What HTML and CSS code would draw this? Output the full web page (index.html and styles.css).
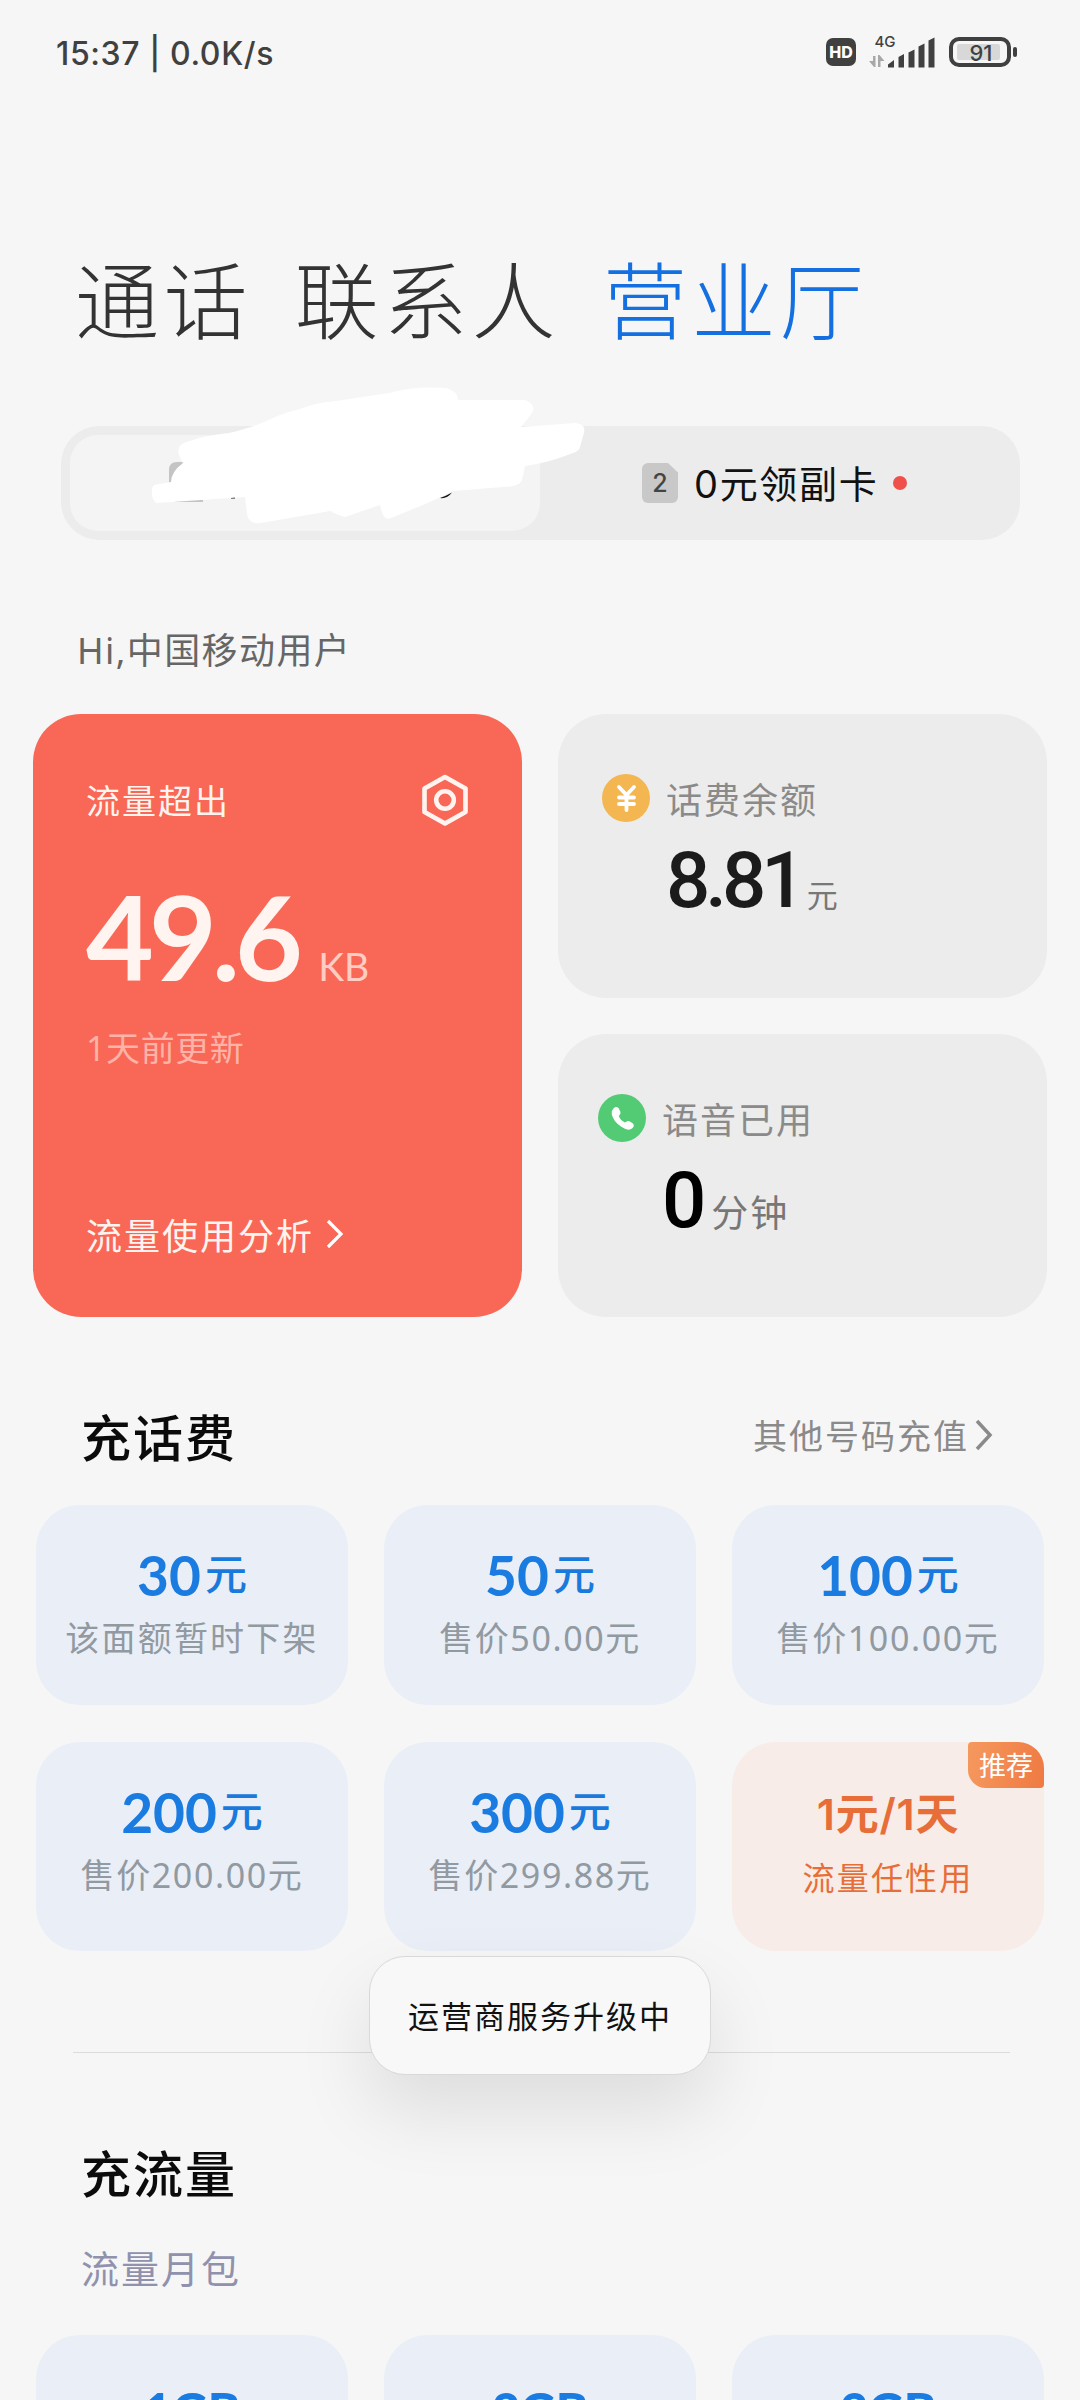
FILE: index.html
```html
<!DOCTYPE html>
<html lang="zh-CN">
<head>
<meta charset="utf-8">
<title>营业厅</title>
<link rel="stylesheet" href="styles.css">
</head>
<body>
<div class="screen">
  <header class="status">
    <span class="status-time">15:37 | 0.0K/s</span>
    <svg class="status-icons" viewBox="820 28 200 48" width="200" height="48">
      <rect x="826" y="38" width="30" height="28" rx="7" fill="#404040"/>
      <text x="841" y="57.5" text-anchor="middle" class="hd">HD</text>
      <text x="874.5" y="46.500" class="g4">4G</text>
      <g fill="#a8a8a8"><path d="M873 56h2.500v11h-1.500l-5-6h4z"/><path d="M878 67h2.500v-6h4l-5-6h-1.500z"/></g>
      <g fill="#404040">
        <path d="M888 67.500v-3l6-4.500v7.500z"/><path d="M898.500 67.500v-10.500l5.500-3v13.500z"/><path d="M908.500 67.500v-15l6-3v18z"/><path d="M918.500 67.500v-21l6-3v24z"/><path d="M928.500 67.500v-27l6-3v30z"/>
        <rect x="1013" y="47" width="4" height="10" rx="2"/>
      </g>
      <rect x="951" y="39" width="58" height="26" rx="8" fill="none" stroke="#404040" stroke-width="4"/>
      <rect x="957" y="44" width="43" height="16" rx="2" fill="#d8d8d8"/>
      <text x="981" y="60.500" text-anchor="middle" class="batt">91</text>
    </svg>
  </header>

  <nav class="tabs">
    <span>通话</span><span>联系人</span><span class="active">营业厅</span>
  </nav>

  <div class="sim">
    <div class="sim-item selected"></div>
    <div class="sim-item">
      <span class="sim-icon">2</span>
      <span class="sim-label">0元领副卡</span>
      <i class="dot"></i>
    </div>
    <svg class="scribble" viewBox="150 385 440 142" width="440" height="142">
      <path d="M169 484v-14q0-8 8-8h10l-4 22h-10z" fill="#c4c4c4"/>
      <rect x="175" y="500" width="28" height="2" fill="#c4c4c4"/>
      <rect x="231" y="495.500" width="4" height="3" fill="#111"/>
      <path fill="#fff" d="M154 485L171 482Q171 472 183 463Q173 448 184 443Q205 435 229 433Q250 428 264 422Q285 412 300 409Q318 402 336 401L389 393Q415 386 446 388Q458 391 458 400L525 400Q537 405 532 413L521 427L575 423Q588 424 583 436L580 447Q579 451 573 453Q548 463 525 466L522 480Q519 487 503 487L453 491Q425 505 388 519Q383 519 380 505L345 517Q340 516 330 511L261 523Q249 525 247 514L245 497L157 503Q151 501 152 488Z"/>
      <path d="M440 498Q446 496 452 492.500Q447 499 440 498Z" fill="#111"/>
    </svg>
  </div>

  <p class="hello">Hi,中国移动用户</p>

  <section class="usage">
    <article class="data-card">
      <div class="data-head">
        <span>流量超出</span>
        <svg viewBox="0 0 48 52" width="48" height="52" fill="none" stroke="#fff4f0" stroke-width="4.600" stroke-linejoin="round"><path d="M24 3L44.500 14.500V38L24 49.500L3.500 38V14.500Z"/><circle cx="24" cy="26" r="8.800"/></svg>
      </div>
      <div class="data-value"><b>49.6</b><span>KB</span></div>
      <div class="data-time">1天前更新</div>
      <div class="data-link">流量使用分析<svg viewBox="0 0 18 30" width="18" height="30" fill="none" stroke="#fff" stroke-width="3.200"><path d="M2 2L15 15L2 28"/></svg></div>
    </article>
    <article class="mini fee">
      <svg viewBox="0 0 48 48" width="48" height="48"><circle cx="24" cy="24" r="24" fill="#f3b651"/><g stroke="#fff" stroke-width="3.800" fill="none" stroke-linecap="round"><path d="M17 13L24.500 21L32 13M24.500 21V36M17 23.500H32M17 30H32"/></g></svg>
      <div class="mini-body">
        <div class="mini-title">话费余额</div>
        <div class="mini-value"><b>8.81</b><span>元</span></div>
      </div>
    </article>
    <article class="mini voice">
      <svg viewBox="0 0 48 48" width="48" height="48"><circle cx="24" cy="24" r="24" fill="#52cb74"/><path fill="#fff" d="M15.500 14.500Q18 12 20.500 14L22.500 18Q23 20 20.800 22Q22.500 26.500 27 28.500Q29 26.500 31 27L35 29.500Q37 32 34 34.500Q30 37.500 23 32.500Q15 27 13.700 20Q13.300 16.500 15.500 14.500Z"/></svg>
      <div class="mini-body">
        <div class="mini-title">语音已用</div>
        <div class="mini-value"><b>0</b><span>分钟</span></div>
      </div>
    </article>
  </section>

  <div class="section-head">
    <h2>充话费</h2>
    <a>其他号码充值<svg viewBox="0 0 18 32" width="18" height="32" fill="none" stroke="#8a8a8a" stroke-width="3.500"><path d="M2 2L15 16L2 30"/></svg></a>
  </div>
  <section class="grid recharge">
    <div class="plan"><div class="amount"><b>30</b><span>元</span></div><div class="price cjk">该面额暂时下架</div></div>
    <div class="plan"><div class="amount"><b>50</b><span>元</span></div><div class="price">售价50.00元</div></div>
    <div class="plan"><div class="amount"><b>100</b><span>元</span></div><div class="price">售价100.00元</div></div>
    <div class="plan"><div class="amount"><b>200</b><span>元</span></div><div class="price">售价200.00元</div></div>
    <div class="plan"><div class="amount"><b>300</b><span>元</span></div><div class="price">售价299.88元</div></div>
    <div class="plan promo"><span class="badge">推荐</span><div class="promo-title">1元/1天</div><div class="promo-sub">流量任性用</div></div>
  </section>

  <hr class="divider">

  <div class="section-head second"><h2>充流量</h2></div>
  <p class="sub">流量月包</p>
  <section class="grid data">
    <div class="plan"><div class="amount"><b>1GB</b></div></div>
    <div class="plan"><div class="amount"><b>2GB</b></div></div>
    <div class="plan"><div class="amount"><b>3GB</b></div></div>
  </section>

  <div class="toast">运营商服务升级中</div>
</div>
</body>
</html>
```
FILE: styles.css
```css
* { box-sizing: border-box; margin: 0; padding: 0; }
body {
  font-family: "Noto Sans CJK SC", sans-serif;
  background: #f6f6f6;
}
.screen {
  position: relative;
  width: 1080px;
  height: 2400px;
  overflow: hidden;
  background: #f6f6f6;
  white-space: nowrap;
}
.status {
  display: flex;
  justify-content: space-between;
  align-items: center;
  height: 104px;
  padding: 0 60px 0 56px;
}
.status-time { padding-top: 3px; font: 500 32px/40px Inter, sans-serif; letter-spacing: .6px; color: #404040; }
.status-icons text { font-family: Inter, sans-serif; fill: #404040; }
.status-icons .hd { font-size: 16px; font-weight: 800; fill: #fff; }
.status-icons .g4 { font-size: 15px; font-weight: 500; }
.status-icons .batt { font-size: 22px; font-weight: 500; }

.tabs {
  display: flex;
  gap: 43px;
  margin-top: 133px;
  padding-left: 75px;
  font-size: 84px;
  font-weight: 300;
  line-height: 120px;
  letter-spacing: 4.400px;
  color: #333;
}
.tabs .active { color: #146fe0; }

.sim {
  position: relative;
  display: grid;
  grid-template-columns: 470px 1fr;
  width: 959px;
  height: 114px;
  margin: 69px 0 0 61px;
  padding: 9px 9px 9px 9px;
  border-radius: 38px;
  background: #ececec;
}
.sim-item { display: flex; align-items: center; padding-left: 102px; }
.sim-item.selected { border-radius: 28px; background: #f4f4f4; }
.sim-icon {
  width: 36px;
  height: 40px;
  border-radius: 6px;
  background: #c8c8c8;
  clip-path: polygon(0 0, 72% 0, 100% 24%, 100% 100%, 0 100%);
  font: 500 25px/40px Inter, sans-serif;
  text-align: center;
  color: #444;
}
.sim-label { margin-left: 16px; padding-top: 2px; font: 400 38px/50px Inter, "Noto Sans CJK SC", sans-serif; letter-spacing: 1.700px; color: #111; }
.dot { width: 14px; height: 14px; margin-left: 15px; border-radius: 50%; background: #f0504c; }
.scribble { position: absolute; left: 89px; top: -41px; }

.hello {
  margin: 91px 0 0 77px;
  font: 400 36px/40px "Noto Sans", "Noto Sans CJK SC", sans-serif;
  letter-spacing: 1.4px;
  color: #666;
}

.usage {
  display: grid;
  grid-template-columns: 489px 489px;
  grid-template-rows: 284px 283px;
  gap: 36px;
  margin: 43px 0 0 33px;
}
.data-card {
  grid-row: span 2;
  padding: 60px 53px 0;
  border-radius: 48px;
  background: #f96856;
  color: #fff4f0;
}
.data-head { display: flex; justify-content: space-between; font-size: 34px; line-height: 52px; letter-spacing: 2px; }
.data-value { display: flex; align-items: baseline; height: 160px; margin-top: 30px; line-height: 160px; }
.data-value b { font: 700 117px/160px Lato, sans-serif; letter-spacing: -4.800px; }
.data-value span { margin-left: 20px; font: 400 39px/60px Lato, sans-serif; color: #ffcdc3; }
.data-time { margin-top: 8px; font: 400 34px/48px "Noto Sans", "Noto Sans CJK SC", sans-serif; letter-spacing: .6px; color: #fdb3a7; }
.data-link { display: flex; align-items: center; gap: 12px; margin-top: 137px; font-size: 36px; line-height: 50px; letter-spacing: 2px; }

.mini { display: flex; gap: 16px; padding: 60px 0 0 44px; border-radius: 48px; background: #ececec; }
.mini.voice { padding-left: 40px; }
.mini-title { font-size: 36px; line-height: 48px; letter-spacing: 2px; color: #8a8a8a; }
.mini-value { display: flex; align-items: baseline; height: 100px; margin-top: 12px; }
.mini-value b { font: 500 78px/94px Roboto, sans-serif; letter-spacing: -5px; color: #1b1b1b; }
.mini-value span { margin-left: 6px; font-size: 31px; line-height: 50px; color: #777; }
.voice .mini-value b { color: #000; }
.voice .mini-value span { margin-left: 10px; font-size: 37px; letter-spacing: 2px; }

.section-head { display: flex; justify-content: space-between; margin: 88px 87px 0 81px; height: 60px; line-height: 60px; }
h2 { font-size: 50px; font-weight: 500; letter-spacing: 2px; color: #0b0b0b; }
.section-head a { display: flex; align-items: center; gap: 6px; font-size: 34px; letter-spacing: 2px; color: #8a8a8a; }
.section-head.second { margin-top: 88px; }

.grid { display: grid; grid-template-columns: repeat(3, 312px); gap: 37px 36px; margin: 40px 0 0 36px; }
.recharge { grid-template-rows: 200px 209px; }
.plan { position: relative; padding-top: 36px; border-radius: 44px; background: #e9eef7; text-align: center; }
.amount { display: flex; justify-content: center; gap: 4px; height: 66px; color: #1a79dc; }
.amount b { font: 700 55px/68px Lato, sans-serif; color: #1a7be0; }
.amount span { font-size: 42px; font-weight: 500; line-height: 62px; }
.price { font: 400 34px/62px "Noto Sans", "Noto Sans CJK SC", sans-serif; letter-spacing: 1.6px; color: #9199a1; }
.price.cjk { letter-spacing: 2.200px; }
.promo { background: #f7ece7; color: #e76e38; }
.promo-title { padding-top: 4px; font: 600 43px/64px Inter, "Noto Sans CJK SC", sans-serif; letter-spacing: .8px; }
.promo-sub { font-size: 32px; line-height: 61px; letter-spacing: 2.200px; }
.badge {
  position: absolute;
  top: 0;
  right: 0;
  width: 76px;
  height: 46px;
  border-radius: 4px 26px 4px 18px;
  background: linear-gradient(100deg, #f5995f, #ef7a42);
  color: #fff;
  font-size: 27px;
  line-height: 45px;
}

.divider { width: 937px; height: 1px; margin: 101px 0 0 73px; border: 0; background: #dcdcdc; }
.sub { margin: 46px 0 0 81px; font-size: 38px; line-height: 40px; letter-spacing: 2px; color: #9092ad; }
.data { grid-template-rows: 201px; margin-top: 48px; }
.data .amount b { font-weight: 900; font-size: 49px; line-height: 78px; }

.toast {
  position: absolute;
  left: 369px;
  top: 1956px;
  width: 342px;
  height: 119px;
  border: 1px solid #d9d9d9;
  border-radius: 36px;
  background: #f8f8f8;
  box-shadow: 0 36px 76px rgba(0, 0, 0, .1);
  font-size: 31px;
  line-height: 116px;
  letter-spacing: 2px;
  text-align: center;
  color: #111;
}
```
